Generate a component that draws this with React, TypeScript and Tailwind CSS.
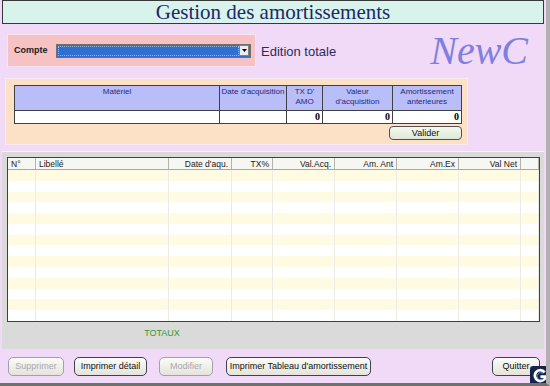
import React from "react"

const gridCols = [
  { label: "N°", w: "w-[28px]", align: "text-left" },
  { label: "Libellé", w: "w-[133px]", align: "text-left" },
  { label: "Date d'aqu.", w: "w-[63px]", align: "text-right" },
  { label: "TX%", w: "w-[41px]", align: "text-right" },
  { label: "Val.Acq.", w: "w-[62px]", align: "text-right" },
  { label: "Am. Ant", w: "w-[62px]", align: "text-right" },
  { label: "Am.Ex", w: "w-[62px]", align: "text-right" },
  { label: "Val Net", w: "w-[62px]", align: "text-right" },
  { label: "", w: "flex-1", align: "text-right" },
]

const matCols = [
  { label: ["Matériel"], w: "w-[205px]" },
  { label: ["Date d'acquisition"], w: "w-[67px]" },
  { label: ["TX D'", "AMO"], w: "w-[36px]" },
  { label: ["Valeur", "d'acquisition"], w: "w-[70px]" },
  { label: ["Amortissement", "anterieures"], w: "flex-1" },
]

function Btn({ children, disabled, className }: { children: React.ReactNode; disabled?: boolean; className: string }) {
  return (
    <button
      className={
        "h-[19px] rounded-[5px] border bg-gradient-to-b from-[#fbfbf8] to-[#e4e4dc] text-[9px] leading-none " +
        (disabled ? "border-[#a0a0b0] text-[#a8a8b0] " : "border-[#404050] text-[#101010] ") +
        className
      }
    >
      {children}
    </button>
  )
}

export default function App() {
  const rows = Array.from({ length: 14 })
  return (
    <div
      className="relative flex h-[386px] w-[550px] flex-col overflow-hidden border-b-[3px] border-r-[4px] border-b-[#707070] border-r-[#b0b0b0] bg-[#f1d9f8]"
      style={{ fontFamily: '"Liberation Sans", Arial, sans-serif' }}
    >
      {/* title */}
      <div
        className="mx-[2px] flex h-[24px] items-center justify-center border border-[#383838] bg-[#d8f3eb] text-[21px] leading-none text-[#1c2868]"
        style={{ fontFamily: '"Liberation Serif", "Times New Roman", serif' }}
      >
        Gestion des amortissements
      </div>

      {/* compte row */}
      <div className="mt-[10px] flex h-[33px] items-center">
        <div className="ml-[7px] flex h-[33px] w-[249px] items-center border border-[#f8e4f0] bg-[#f6c2c4] pl-[6px]">
          <span className="w-[42px] text-[9px] font-bold text-[#202020]">Compte</span>
          <div className="flex h-[14px] w-[195px] items-center border border-[#707070] bg-[#2f6fd0] p-px">
            <div className="h-full flex-1 border border-dotted border-[#9cb8e8]" />
            <div className="flex h-[11px] w-[10px] items-center justify-center border border-[#808080] bg-[#ececec]">
              <svg width="5" height="3" viewBox="0 0 5 3">
                <path d="M0 0h5L2.5 3z" fill="#000" />
              </svg>
            </div>
          </div>
        </div>
        <span className="ml-[5px] mt-[2px] text-[13px] text-[#2c2c5a]">Edition totale</span>
        <span
          className="ml-auto mr-[18px] text-[40px] italic leading-none text-[#7f7fe0]"
          style={{ fontFamily: '"Liberation Serif", "Times New Roman", serif' }}
        >
          NewC
        </span>
      </div>

      {/* materiel panel */}
      <div className="ml-[5px] mt-[11px] flex h-[67px] w-[463px] flex-col border border-[#f8ecf0] bg-[#fde1c6] pl-[8px] pt-[6px]">
        <div className="flex w-[448px] flex-col border border-[#404040]">
          <div className="flex h-[24px] bg-[#b9bdf8]">
            {matCols.map((c, i) => (
              <div
                key={i}
                className={
                  c.w +
                  " flex flex-col items-center pt-px text-[8px] leading-[10px] text-[#1e2a80] " +
                  (i < matCols.length - 1 ? "border-r border-[#404040]" : "")
                }
              >
                {c.label.map((l) => (
                  <span key={l}>{l}</span>
                ))}
              </div>
            ))}
          </div>
          <div className="flex h-[13px] border-t border-[#404040] bg-white">
            {matCols.map((c, i) => (
              <div
                key={i}
                className={
                  c.w +
                  " pr-[2px] text-right text-[10px] font-bold leading-[12px] text-black " +
                  (i < matCols.length - 1 ? "border-r border-[#404040]" : "")
                }
                style={{ fontFamily: '"Liberation Serif", serif' }}
              >
                {i >= 2 ? "0" : ""}
              </div>
            ))}
          </div>
        </div>
        <div className="mt-[2px] flex w-[448px] justify-end">
          <button className="h-[14px] w-[73px] rounded-[4px] border border-[#505050] bg-gradient-to-b from-[#f4f8ee] to-[#dfe8d6] text-[9px] leading-none text-[#101010]">
            Valider
          </button>
        </div>
      </div>

      {/* grid panel */}
      <div className="mx-[2px] mt-[6px] flex h-[198px] flex-col border-t border-[#f4f4f4] bg-[#dadada] pl-[5px] pr-[4px] pt-[5px]">
        <div className="flex h-[165px] w-[533px] flex-col border border-[#404040] bg-white">
          <div className="flex h-[12px] border-b border-[#a8a8a0] bg-[#f6f6f2]">
            {gridCols.map((c, i) => (
              <div
                key={i}
                className={
                  c.w +
                  " " +
                  c.align +
                  " border-r border-[#b4b4ac] px-[3px] text-[8.5px] leading-[12px] text-[#202020]"
                }
              >
                {c.label}
              </div>
            ))}
          </div>
          <div className="flex flex-1 flex-col">
            {rows.map((_, r) => (
              <div key={r} className={"flex flex-1 " + (r % 2 === 0 ? "bg-[#fffbe2]" : "bg-white")}>
                {gridCols.map((c, i) => (
                  <div key={i} className={c.w + " border-r border-[#ecece4]"} />
                ))}
              </div>
            ))}
          </div>
        </div>
        <div className="mt-[5px] w-[310px] text-center text-[9px] text-[#2f9a30]">TOTAUX</div>
      </div>

      {/* buttons */}
      <div className="mt-[8px] flex items-center">
        <Btn disabled className="ml-[8px] w-[56px]">Supprimer</Btn>
        <Btn className="ml-[10px] w-[73px]">Imprimer détail</Btn>
        <Btn disabled className="ml-[12px] w-[54px]">Modifier</Btn>
        <Btn className="ml-[13px] w-[145px]">Imprimer Tableau d'amortissement</Btn>
        <Btn className="ml-auto mr-[6px] w-[48px]">Quitter</Btn>
      </div>

      {/* G badge */}
      <div className="absolute bottom-[-3px] right-[-4px] flex h-[20px] w-[20px] items-center justify-center rounded-tl-[3px] bg-[#16244a]">
        <svg width="16" height="16" viewBox="0 0 16 16">
          <path d="M12.6 4.3A5.4 5.4 0 1 0 13.6 8.6H8.4" fill="none" stroke="#ffffff" strokeWidth="2.8" />
          <path d="M11.2 5.6A3.6 3.6 0 1 0 11.9 10" fill="none" stroke="#5a9be8" strokeWidth="0.9" />
        </svg>
      </div>
    </div>
  )
}
